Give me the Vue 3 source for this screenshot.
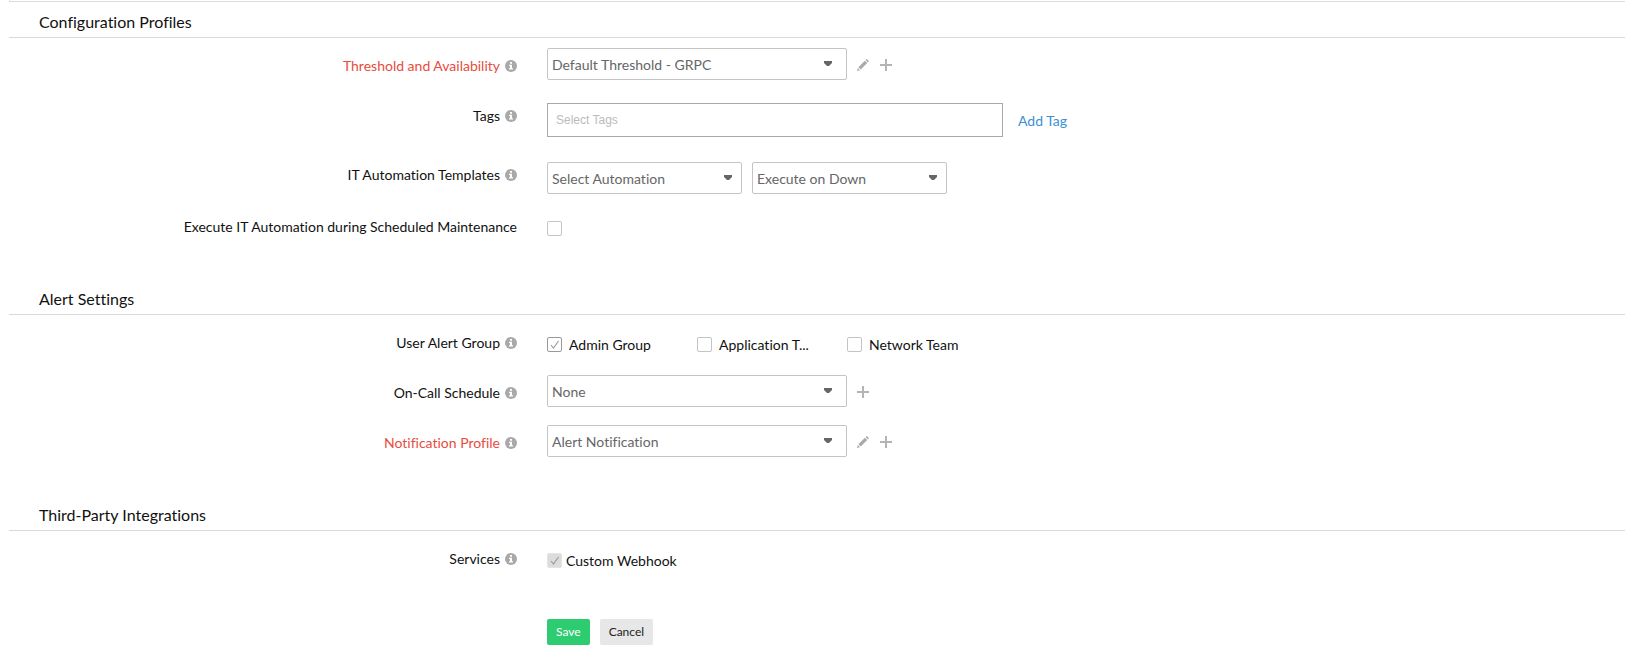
<script setup>
import { h, ref } from 'vue'

const threshold = ref('Default Threshold - GRPC')
const automation = ref('Select Automation')
const trigger = ref('Execute on Down')
const schedule = ref('None')
const profile = ref('Alert Notification')
const tags = ref('')
const duringMaintenance = ref(false)
const webhook = ref(true)
const groups = ref([
  { id: 'admin', name: 'Admin Group', checked: true },
  { id: 'application', name: 'Application T...', checked: false },
  { id: 'network', name: 'Network Team', checked: false },
])

const svg = (size, children) =>
  h('svg', { width: size, height: size, viewBox: `0 0 ${size} ${size}`, 'aria-hidden': 'true' }, children)

const InfoIcon = () =>
  svg(12, [
    h('circle', { cx: 6, cy: 6, r: 6, fill: '#a9a9a9' }),
    h('path', { d: 'M5 2h2v1.7H5zM4 4.8h3v3.4h1v1.3H4V8.2h1V6H4z', fill: '#fff' }),
  ])
const PencilIcon = () =>
  svg(12, [
    h('path', { d: 'M0 12l.8-3L2.9 11.2zM1.4 8.2L7.9 1.8l2.3 2.3-6.5 6.5zM8.6 1.1L9.7 0 12 2.2l-1.1 1.2z', fill: '#a9a9a9' }),
  ])
const PlusIcon = () => svg(12, [h('path', { d: 'M5 0h2v5h5v2H7v5H5V7H0V5h5z', fill: '#b4b4b4' })])
const Arrow = () =>
  h('svg', { width: 8, height: 5, viewBox: '0 0 8 5', 'aria-hidden': 'true' }, [
    h('path', { d: 'M0 0h8v2L5 5H3L0 2z', fill: '#666' }),
  ])
const Tick = () =>
  svg(15, [h('path', { d: 'M4 8l2.5 3L11.5 4', fill: 'none', stroke: '#999', 'stroke-width': 1.1 })])
</script>

<template>
  <form class="page" @submit.prevent>
    <div class="previous"></div>

    <section>
      <h2>Configuration Profiles</h2>
      <div class="rows tight">
        <div class="row">
          <div class="name low required">
            <label for="threshold">Threshold and Availability</label><InfoIcon />
          </div>
          <div class="field">
            <span class="select wide">
              <select id="threshold" v-model="threshold"><option>Default Threshold - GRPC</option></select>
              <span class="arrow"><Arrow /></span>
            </span>
            <div class="actions">
              <button type="button" class="icon" aria-label="Edit threshold profile"><PencilIcon /></button>
              <button type="button" class="icon" aria-label="Add threshold profile"><PlusIcon /></button>
            </div>
          </div>
        </div>

        <div class="row tags-row">
          <div class="name"><label for="tags">Tags</label><InfoIcon /></div>
          <div class="field">
            <input id="tags" v-model="tags" class="tags" type="text" placeholder="Select Tags" />
            <a class="add" href="#">Add Tag</a>
          </div>
        </div>

        <div class="row">
          <div class="name"><label for="automation">IT Automation Templates</label><InfoIcon /></div>
          <div class="field pair">
            <span class="select">
              <select id="automation" v-model="automation"><option>Select Automation</option></select>
              <span class="arrow"><Arrow /></span>
            </span>
            <span class="select">
              <select v-model="trigger" aria-label="Execute on"><option>Execute on Down</option></select>
              <span class="arrow"><Arrow /></span>
            </span>
          </div>
        </div>

        <div class="row check-row">
          <div class="name"><label for="maintenance">Execute IT Automation during Scheduled Maintenance</label></div>
          <div class="field">
            <span class="check"><span class="box">
              <input id="maintenance" v-model="duringMaintenance" type="checkbox" />
              <Tick v-if="duringMaintenance" class="tick" />
            </span></span>
          </div>
        </div>
      </div>
    </section>

    <section>
      <h2>Alert Settings</h2>
      <div class="rows">
        <div class="row check-row">
          <div class="name"><span id="groups">User Alert Group</span><InfoIcon /></div>
          <div class="field groups" role="group" aria-labelledby="groups">
            <label v-for="g in groups" :key="g.id" class="check">
              <span class="box"><input v-model="g.checked" type="checkbox" /><Tick v-if="g.checked" class="tick" /></span>
              {{ g.name }}
            </label>
          </div>
        </div>

        <div class="row">
          <div class="name low"><label for="schedule">On-Call Schedule</label><InfoIcon /></div>
          <div class="field">
            <span class="select wide">
              <select id="schedule" v-model="schedule"><option>None</option></select>
              <span class="arrow"><Arrow /></span>
            </span>
            <div class="actions">
              <button type="button" class="icon" aria-label="Add on-call schedule"><PlusIcon /></button>
            </div>
          </div>
        </div>

        <div class="row">
          <div class="name low required"><label for="profile">Notification Profile</label><InfoIcon /></div>
          <div class="field">
            <span class="select wide">
              <select id="profile" v-model="profile"><option>Alert Notification</option></select>
              <span class="arrow"><Arrow /></span>
            </span>
            <div class="actions">
              <button type="button" class="icon" aria-label="Edit notification profile"><PencilIcon /></button>
              <button type="button" class="icon" aria-label="Add notification profile"><PlusIcon /></button>
            </div>
          </div>
        </div>
      </div>
    </section>

    <section>
      <h2>Third-Party Integrations</h2>
      <div class="rows">
        <div class="row check-row">
          <div class="name"><span id="services">Services</span><InfoIcon /></div>
          <div class="field" role="group" aria-labelledby="services">
            <label class="check locked">
              <span class="box"><input v-model="webhook" type="checkbox" disabled /><Tick v-if="webhook" class="tick" /></span>
              Custom Webhook
            </label>
          </div>
        </div>
      </div>
    </section>

    <div class="row footer">
      <div class="buttons">
        <button type="submit" class="save">Save</button>
        <button type="button" class="cancel">Cancel</button>
      </div>
    </div>
  </form>
</template>

<style>
body {
  background: #fff;
}
svg {
  display: block;
}
</style>

<style scoped>
.page {
  padding-left: 9px;
  font-family: Lato, "Liberation Sans", sans-serif;
  font-size: 14px;
  font-variant-ligatures: none;
  line-height: 20px;
  color: #111;
}
.previous {
  height: 1px;
  border-left: 1px solid #ddd;
  border-bottom: 1px solid #ddd;
}
h2 {
  margin: 0;
  padding: 8px 30px 3px;
  border-bottom: 1px solid #d9d9d9;
  font-size: 16px;
  font-weight: 400;
  line-height: 24px;
}
section + section {
  margin-top: 38px;
}
.rows {
  display: flex;
  flex-direction: column;
  gap: 18px;
  padding-top: 18px;
}
.rows.tight {
  gap: 23px;
  padding-top: 10px;
}
.row {
  display: grid;
  grid-template-columns: 508fr 1078fr;
  column-gap: 30px;
  align-items: start;
}
.tags-row {
  padding-bottom: 2px;
}
.check-row {
  padding-bottom: 1px;
}
.name {
  display: flex;
  justify-content: flex-end;
  align-items: center;
  gap: 5px;
  text-align: right;
}
.tight .name:not(.low) {
  padding-top: 3px;
}
.tight .check-row .name:not(.low) {
  padding-top: 0;
}
.name.low {
  padding-top: 8px;
}
.required {
  color: #e84c3d;
}
.field {
  display: flex;
  align-items: center;
}
.pair {
  gap: 10px;
}
.select {
  position: relative;
  width: 195px;
}
.select.wide {
  width: 300px;
}
select {
  display: block;
  box-sizing: border-box;
  width: 100%;
  height: 32px;
  padding: 1px 24px 0 4px;
  border: 1px solid #c4c4c4;
  border-radius: 2px;
  appearance: none;
  background: #fff;
  color: #666;
  font: inherit;
}
.arrow {
  position: absolute;
  top: 13px;
  right: 10px;
  pointer-events: none;
}
.wide .arrow {
  right: 15px;
}
.actions {
  display: flex;
  gap: 11px;
  margin-left: 10px;
  padding-top: 2px;
}
.icon {
  padding: 0;
  border: 0;
  background: none;
}
.tags {
  box-sizing: border-box;
  width: 456px;
  height: 34px;
  padding: 0 8px;
  border: 1px solid #a9a9a9;
  font: 12px "Liberation Sans", sans-serif;
  color: #666;
}
.tags::placeholder {
  color: #bbb;
}
.add {
  margin-left: 15px;
  padding-top: 2px;
  color: #3b8fd6;
  text-decoration: none;
}
.check {
  display: flex;
  align-items: center;
  gap: 7px;
  min-height: 23px;
  line-height: 23px;
}
.groups .check {
  width: 150px;
}
.box {
  position: relative;
  width: 15px;
  height: 15px;
}
.box input {
  display: block;
  box-sizing: border-box;
  width: 15px;
  height: 15px;
  margin: 0;
  appearance: none;
  border: 1px solid #c4c4c4;
  border-radius: 2px;
  background: #fff;
}
.box input:checked {
  border-color: #999;
}
.tick {
  position: absolute;
  top: 0;
  left: 0;
  pointer-events: none;
}
.locked {
  gap: 4px;
}
.locked .box input {
  border-color: #e4e4e4;
  background: #dcdcdc;
}
.footer {
  margin-top: 46px;
}
.buttons {
  grid-column: 2;
  display: flex;
  gap: 10px;
}
.save,
.cancel {
  height: 26px;
  padding: 0 9px;
  border: 0;
  border-radius: 2px;
  font: inherit;
  font-size: 12px;
}
.save {
  background: #2ecc71;
  color: #fff;
}
.cancel {
  background: #e7e7e7;
  color: #222;
}
</style>
